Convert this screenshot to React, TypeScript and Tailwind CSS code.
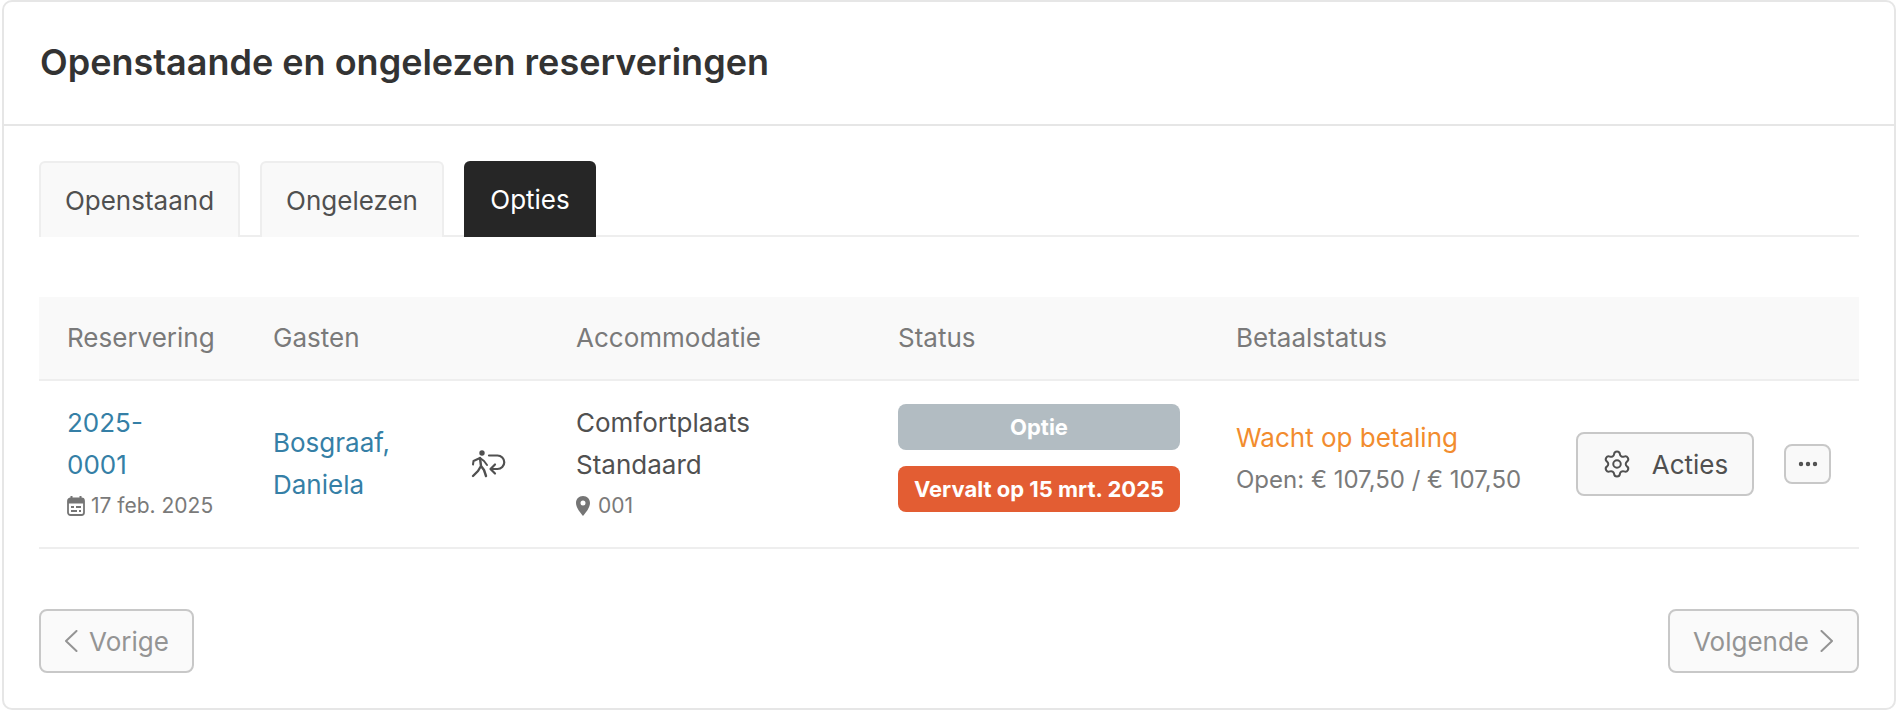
import { Settings, MoreHorizontal } from "lucide-react";

const WalkSwap = () => (
  <svg viewBox="0 0 36 30" className="h-[30px] w-[36px] text-[#505050]" fill="none">
    <circle cx="12" cy="4" r="2.7" fill="currentColor" />
    <path d="M10 9 L11 17 L8 22 L3 27 M11 17 L14 21 L16 27" stroke="currentColor" strokeWidth="2.4" strokeLinecap="round" strokeLinejoin="round" />
    <path d="M10 9 L3.5 12 L3 15.5 M10 9 L14 12 L17 16" stroke="currentColor" strokeWidth="2" strokeLinecap="round" strokeLinejoin="round" />
    <path d="M19 6.5 H27.5 A6.75 6.75 0 0 1 27.5 20 H21" stroke="currentColor" strokeWidth="2.2" strokeLinecap="round" />
    <path d="M25 15.5 L20.5 20 L25 24.5" stroke="currentColor" strokeWidth="2.2" strokeLinecap="round" strokeLinejoin="round" />
  </svg>
);

const CalendarIcon = () => (
  <svg viewBox="0 0 18 20" className="h-[20px] w-[18px] text-[#757575]" fill="none">
    <path d="M4.5 0 V3 M13.5 0 V3" stroke="currentColor" strokeWidth="2" />
    <path d="M1 5 A3 3 0 0 1 4 2 H14 A3 3 0 0 1 17 5 V7.5 H1 Z" fill="currentColor" />
    <rect x="1" y="2.5" width="16" height="16.5" rx="2.5" stroke="currentColor" strokeWidth="1.8" />
    <path d="M4 11 H7 M9 11 H14 M4 15 H10 M12 15 H14" stroke="currentColor" strokeWidth="1.8" />
  </svg>
);

const PinIcon = () => (
  <svg viewBox="0 0 14 20" className="h-[20px] w-[14px] text-[#757575]">
    <path fillRule="evenodd" fill="currentColor" d="M7 0 C2.8 0 0 3 0 7 C0 12 5 17.5 7 20 C9 17.5 14 12 14 7 C14 3 11.2 0 7 0 Z M7 4.5 A2.5 2.5 0 1 1 7 9.5 A2.5 2.5 0 1 1 7 4.5 Z" />
  </svg>
);

const ChevLeft = () => (
  <svg viewBox="0 0 14 22" className="h-[22px] w-[14px]" fill="none">
    <path d="M12.5 1 L2 11 L12.5 21" stroke="currentColor" strokeWidth="2" strokeLinecap="round" strokeLinejoin="round" />
  </svg>
);

const ChevRight = () => (
  <svg viewBox="0 0 14 22" className="h-[22px] w-[14px]" fill="none">
    <path d="M1.5 1 L12 11 L1.5 21" stroke="currentColor" strokeWidth="2" strokeLinecap="round" strokeLinejoin="round" />
  </svg>
);

const tabBase = "flex h-[76px] items-center justify-center rounded-t-[6px] text-[26px]";
const tabIdle = "border-2 border-b-0 border-[#eeeeee] bg-[#f9f9f9] text-[#505050] relative z-10";

export default function App() {
  return (
    <div className="h-[712px] w-[1898px] overflow-hidden bg-white font-['Inter','Liberation_Sans',sans-serif] text-[26px] text-[#404040]">
      <div className="mx-[2px] flex h-[710px] flex-col rounded-[10px] border-2 border-[#e6e6e6] bg-white">
        <div className="flex h-[124px] shrink-0 items-center border-b-2 border-[#e6e6e6] pb-[3px] pl-[36px]">
          <h1 className="text-[36px] font-semibold text-[#333333]">Openstaande en ongelezen reserveringen</h1>
        </div>

        <div className="mx-[35px] flex flex-1 flex-col">
          <div className="mt-[35px] flex h-[76px] gap-[20px] border-b-2 border-[#eeeeee]">
            <div className={`${tabBase} ${tabIdle} w-[201px]`}>Openstaand</div>
            <div className={`${tabBase} ${tabIdle} w-[184px]`}>Ongelezen</div>
            <div className={`${tabBase} relative z-10 w-[132px] bg-[#262626] text-white`}>Opties</div>
          </div>

          <div className="mt-[60px] grid grid-cols-[206px_303px_322px_338px_1fr] border-b-2 border-[#eeeeee] bg-[#f9f9f9] text-[#7a7a7a]">
            <div className="flex h-[82px] items-center pb-[1px] pl-[28px]">Reservering</div>
            <div className="flex h-[82px] items-center pb-[1px] pl-[28px]">Gasten</div>
            <div className="flex h-[82px] items-center pb-[1px] pl-[28px]">Accommodatie</div>
            <div className="flex h-[82px] items-center pb-[1px] pl-[28px]">Status</div>
            <div className="flex h-[82px] items-center pb-[1px] pl-[28px]">Betaalstatus</div>
          </div>

          <div className="grid h-[168px] grid-cols-[206px_303px_322px_338px_1fr] items-center border-b-2 border-[#eeeeee]">
            <div className="pb-[1px] pl-[28px] leading-[42px] text-[#357fa6]">
              2025-
              <br />
              0001
              <div className="flex h-[40px] items-center gap-[6px] text-[21px] text-[#7a7a7a]">
                <CalendarIcon />
                17 feb. 2025
              </div>
            </div>
            <div className="flex items-center pl-[28px]">
              <div className="w-[197px] leading-[42px] text-[#357fa6]">Bosgraaf,<br />Daniela</div>
              <WalkSwap />
            </div>
            <div className="pb-[1px] pl-[28px] leading-[42px] text-[#505050]">
              Comfortplaats
              <br />
              Standaard
              <div className="flex h-[40px] items-center gap-[8px] text-[21px] text-[#7a7a7a]">
                <PinIcon />
                001
              </div>
            </div>
            <div className="flex flex-col gap-[16px] pl-[28px] pb-[12px] pr-[28px] text-center text-[22px] font-bold text-white">
              <div className="flex h-[46px] items-center justify-center rounded-[8px] bg-[#b2bcc2]">Optie</div>
              <div className="flex h-[46px] items-center justify-center rounded-[8px] bg-[#e35d33]">Vervalt op 15 mrt. 2025</div>
            </div>
            <div className="flex items-center pl-[28px]">
              <div className="w-[340px] pb-[12px]">
                <div className="leading-[42px] text-[#f28c2e]">Wacht op betaling</div>
                <div className="leading-[41px] text-[24px] text-[#7a7a7a]">Open: € 107,50 / € 107,50</div>
              </div>
              <button className="flex h-[64px] w-[178px] items-center justify-center gap-[20px] rounded-[8px] border-2 border-[#c8c8c8] bg-[#f9f9f9] text-[#505050]">
                <Settings className="h-[30px] w-[30px]" strokeWidth={1.6} />
                Acties
              </button>
              <button className="ml-[30px] flex h-[40px] w-[47px] items-center justify-center rounded-[8px] border-2 border-[#c8c8c8] bg-[#f9f9f9] text-[#505050]">
                <MoreHorizontal className="h-[24px] w-[24px]" strokeWidth={2.4} />
              </button>
            </div>
          </div>

          <div className="mt-[60px] flex justify-between text-[#949494]">
            <button className="flex h-[64px] w-[155px] items-center justify-center gap-[11px] rounded-[8px] border-2 border-[#c8c8c8] bg-[#fafafa]">
              <ChevLeft />
              Vorige
            </button>
            <button className="flex h-[64px] w-[191px] items-center justify-center gap-[11px] rounded-[8px] border-2 border-[#c8c8c8] bg-[#fafafa]">
              Volgende
              <ChevRight />
            </button>
          </div>
        </div>
      </div>
    </div>
  );
}
